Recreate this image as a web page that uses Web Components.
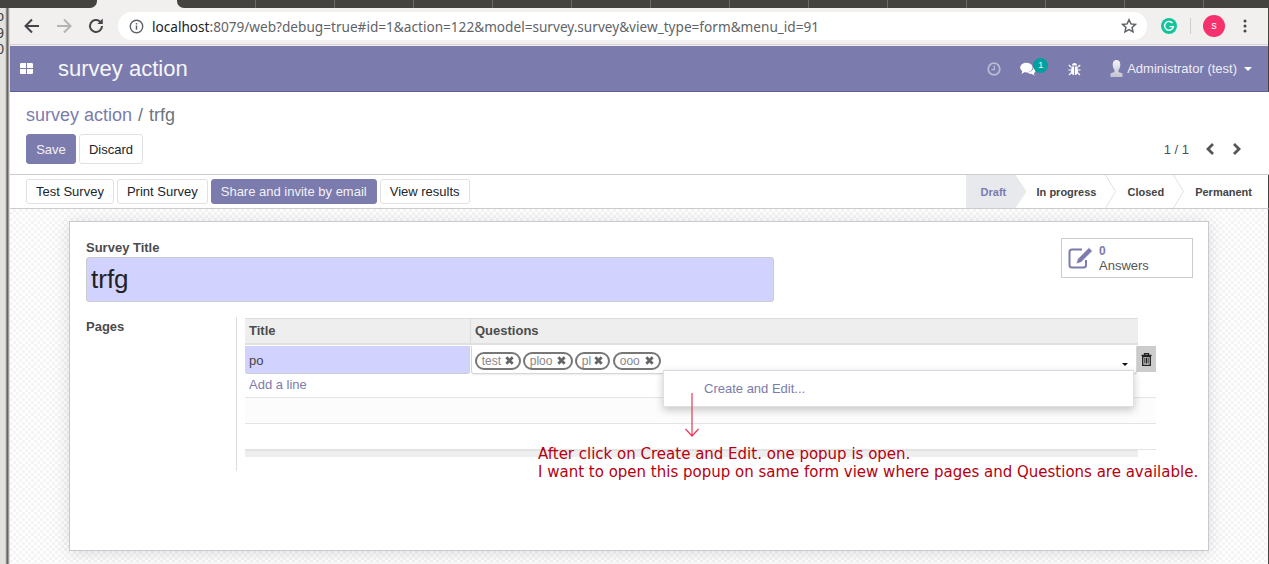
<!DOCTYPE html>
<html>
<head>
<meta charset="utf-8">
<title>survey action</title>
<style>
  html, body { margin: 0; padding: 0; }
  body {
    width: 1269px; height: 564px; overflow: hidden; position: relative;
    display: flex; background: #fff;
    font-family: "Liberation Sans", Arial, sans-serif; font-size: 13px; color: #4c4c4c;
  }
</style>
</head>
<body>
  <window-edge></window-edge>
  <main-column>
    <browser-bar></browser-bar>
    <odoo-navbar></odoo-navbar>
    <control-panel></control-panel>
    <status-bar></status-bar>
    <sheet-area></sheet-area>
  </main-column>
  <anota-cion></anota-cion>

<script>
// Columna principal: apila las barras y la hoja
class MainColumn extends HTMLElement {
  constructor() {
    super();
    this.attachShadow({ mode: 'open' });
    this.shadowRoot.innerHTML = `<style>:host{display:flex;flex-direction:column;flex:1;min-width:0}</style><slot></slot>`;
  }
}

// Trozo de la ventana que asoma por la izquierda
class WindowEdge extends HTMLElement {
  constructor() {
    super();
    this.attachShadow({ mode: 'open' });
    this.shadowRoot.innerHTML = `
      <style>
        :host { display: block; width: 10px; flex: none; height: 564px; overflow: hidden;
          background: linear-gradient(90deg, #e4e2df 0 5px, #bdbbb7 6px, #5f5d59 7px, #6d6b67 8px, #c9c8c5 9px, #ededec 10px); }
        .top { height: 8px; background: #45433f; }
        .txt { width: 4px; overflow: hidden; direction: rtl;
          font: 14px/16.500px "Liberation Sans", sans-serif; color: #444; }
        .txt div { white-space: nowrap; }
      </style>
      <div class="top"></div>
      <div class="txt"><div>o</div><div>9</div><div>0</div></div>`;
  }
}

// Barra del navegador
class BrowserBar extends HTMLElement {
  constructor() {
    super();
    this.attachShadow({ mode: 'open' });
    this.shadowRoot.innerHTML = `
      <style>
        :host { display: block; flex: none; height: 46px; background: #f1f0ee; border-right: 1px solid #45433f; box-sizing: border-box; }
        .tabs { display: flex; height: 8px; background: #f1f0ee; }
        .dark1 { width: 87px; background: #45433f; border-radius: 0 0 7px 0; }
        .tab { width: 80px; }
        .dark2 { flex: 1; border-radius: 0 0 0 7px;
          background: repeating-linear-gradient(90deg, #45433f 0 78px, #6b6965 78px 79px); }
        .tools { display: flex; align-items: center; height: 37px; box-sizing: border-box; border-bottom: 1px solid #d4d3d1; }
        .tools svg { display: block; flex: none; }
        .nav { margin-left: 13px; }
        .omni { display: flex; align-items: center; width: 1029px; height: 28px; margin: 0 0 0 13px; background: #fff;
          border-radius: 14px; box-sizing: border-box; padding-left: 11px; }
        .url { margin-left: 8px; font: 13.620px "Noto Sans", sans-serif; color: #5f6368; white-space: nowrap; flex: 1; }
        .url b { font-weight: 400; color: #202124; }
        .g { width: 16px; height: 16px; border-radius: 50%; background: #15c39a; margin-left: 14px; display: flex; align-items: center; justify-content: center; }
        .sep { width: 1px; height: 16px; background: #d0cfcd; margin: 0 12px 0 13px; }
        .av { width: 22px; height: 22px; border-radius: 50%; background: #f5326e; color: #fff;
          font: 11px/21px "Liberation Sans", sans-serif; text-align: center; }
        .dots { margin-left: 18px; }
      </style>
      <div class="tabs"><div class="dark1"></div><div class="tab"></div><div class="dark2"></div></div>
      <div class="tools">
        <svg class="nav" width="18" height="18" viewBox="0 0 18 18"><path d="M16 9H3M9 2.500 2.500 9 9 15.500" fill="none" stroke="#45464a" stroke-width="2"/></svg>
        <svg style="margin-left:14px" width="18" height="18" viewBox="0 0 18 18"><path d="M2 9h13M9 2.500 15.500 9 9 15.500" fill="none" stroke="#b4b4b4" stroke-width="2"/></svg>
        <svg style="margin-left:14px" width="18" height="18" viewBox="0 0 18 18"><path d="M15 9a6 6 0 1 1-1.800-4.300" fill="none" stroke="#45464a" stroke-width="2"/><path d="M15.800 1.600V7H10.400z" fill="#45464a"/></svg>
        <div class="omni">
          <svg width="15" height="15" viewBox="0 0 15 15"><circle cx="7.500" cy="7.500" r="6.200" fill="none" stroke="#5f6368" stroke-width="1.400"/><path d="M7.500 6.600v4.200M7.500 3.900v1.500" stroke="#5f6368" stroke-width="1.500"/></svg>
          <div class="url"><b>localhost</b>:8079/web?debug=true#id=1&amp;action=122&amp;model=survey.survey&amp;view_type=form&amp;menu_id=91</div>
          <svg style="margin-right:10px" width="16" height="16" viewBox="0 0 16 16"><path d="M8 1.800l1.900 4.100 4.500.5-3.300 3 .9 4.500L8 11.600l-4 2.300.9-4.500-3.300-3 4.500-.5z" fill="none" stroke="#5f6368" stroke-width="1.500"/></svg>
        </div>
        <div class="g"><svg width="12" height="12" viewBox="0 0 12 12"><path d="M9.600 3.200A4.400 4.400 0 1 0 10.400 6.600H6.600" fill="none" stroke="#fff" stroke-width="1.400"/></svg></div>
        <div class="sep"></div>
        <div class="av">s</div>
        <svg class="dots" width="4" height="14" viewBox="0 0 4 14"><circle cx="2" cy="2" r="1.500" fill="#45464a"/><circle cx="2" cy="7" r="1.500" fill="#45464a"/><circle cx="2" cy="12" r="1.500" fill="#45464a"/></svg>
      </div>`;
  }
}

// Barra morada de Odoo
class OdooNavbar extends HTMLElement {
  constructor() {
    super();
    this.attachShadow({ mode: 'open' });
    this.shadowRoot.innerHTML = `
      <style>
        :host { display: flex; align-items: center; flex: none; height: 46px; box-sizing: border-box;
          background: #7c7bad; border-bottom: 1px solid #5f5e97; color: #fff; border-right: 1px solid #45433f; }
        svg { display: block; flex: none; }
        .titulo { font-size: 22px; margin-left: 25px; flex: 1; color: #f6f6fb; }
        .item { position: relative; }
        .badge { position: absolute; left: 13px; top: -4px; width: 15px; height: 15px; border-radius: 50%; background: #00a09d;
          font: 9px/15px "Liberation Sans", sans-serif; text-align: center; color: #fff; }
        .user { font-size: 13px; color: #eeeef6; margin-left: 4px; white-space: nowrap; }
        .caret { width: 0; height: 0; border: 4px solid transparent; border-top-color: #fff; border-bottom: 0; margin: 0 16px 0 7px; }
      </style>
      <svg style="margin-left:10px" width="13" height="11" viewBox="0 0 13 11"><path d="M0 1.200Q0 0 1.200 0H6v5H0zM7 0h4.800Q13 0 13 1.200V5H7zM0 6h6v5H1.200Q0 11 0 9.800zM7 6h6v3.800Q13 11 11.800 11H7z" fill="#fff"/></svg>
      <div class="titulo">survey action</div>
      <svg width="14" height="14" viewBox="0 0 14 14"><circle cx="7" cy="7" r="5.800" fill="none" stroke="#b9b9d5" stroke-width="1.800"/><path d="M7.300 3.500V7.600H4.400" fill="none" stroke="#b9b9d5" stroke-width="1.300"/></svg>
      <div class="item" style="margin-left:19px;width:45px">
        <svg width="16" height="14" viewBox="0 0 16 14"><ellipse cx="6.400" cy="5.600" rx="6.200" ry="4.800" fill="#fff"/><path d="M2.500 8.500 1.500 12l4-2.600z" fill="#fff"/><path d="M13.400 5.600c1.600 1 2.400 2.200 2 3.600-.3 1-1 1.600-1.600 2l.9 2.300-3.600-1.800c-1.500 0-3-.4-4-1.300 3.500 0 6.300-1.900 6.300-4.800z" fill="#fff"/></svg>
        <div class="badge">1</div>
      </div>
      <svg style="margin-left:3px" width="13" height="14" viewBox="0 0 13 14"><path d="M4 3.500Q4 1 6.500 1T9 3.500zM3.500 4.500h2.600V13Q3 12.800 3 9.500zM6.900 4.500h2.600l.5 5q0 3.300-3.100 3.500z" fill="#fff"/><path d="M3 5 .8 3M10 5l2.200-2M3 8H.4M10 8h2.600M3.300 10.800 1 13M9.700 10.800 12 13" stroke="#fff" stroke-width="1.200"/></svg>
      <svg style="margin-left:29px" width="13" height="17" viewBox="0 0 13 17"><defs><linearGradient id="u" x1="0" y1="0" x2="0" y2="1"><stop offset="0" stop-color="#f4f4f6"/><stop offset="1" stop-color="#c4c4d2"/></linearGradient></defs><path d="M6.500 0C9 0 10.300 2 10.300 4.800c0 2.200-.8 4-1.800 5.200v2l4 1.600V17H.5v-3.400l4-1.600v-2C3.500 8.800 2.700 7 2.700 4.800 2.700 2 4 0 6.500 0z" fill="url(#u)"/></svg>
      <div class="user">Administrator (test)</div>
      <div class="caret"></div>`;
  }
}

// Boton de Odoo, con atributo primary
class OBtn extends HTMLElement {
  constructor() {
    super();
    this.attachShadow({ mode: 'open' });
    this.shadowRoot.innerHTML = `
      <style>
        :host { display: inline-flex; align-items: center; justify-content: center; box-sizing: border-box; height: var(--alto, 25px);
          padding: 0 9px; background: #fff; border: 1px solid #dee2e6; border-radius: 3px; color: #212529; white-space: nowrap;
          font: 13px "Liberation Sans", sans-serif; }
        :host([primary]) { background: #7c7bad; border-color: #7c7bad; color: #f1f1f7; }
      </style>
      <slot></slot>`;
  }
}

// Migas, guardar y paginador
class ControlPanel extends HTMLElement {
  constructor() {
    super();
    this.attachShadow({ mode: 'open' });
    this.shadowRoot.innerHTML = `
      <style>
        :host { display: block; flex: none; height: 83px; box-sizing: border-box; padding: 13px 27px 0 16px; border-bottom: 1px solid #ccc; --alto: 30px; }
        .migas { font-size: 18px; line-height: 20px; color: #6c757d; height: 29px; white-space: nowrap; }
        .migas a { color: #7c7bad; }
        .migas span { margin: 0 1px 0 1px; }
        .fila { display: flex; align-items: center; gap: 3px; }
        .pager { margin-left: auto; display: flex; align-items: center; color: #4c4c6c; font-size: 13px; }
        .pager svg { display: block; }
      </style>
      <div class="migas"><a>survey action</a> <span>/</span> trfg</div>
      <div class="fila">
        <o-btn primary style="width:50px">Save</o-btn>
        <o-btn style="width:64px">Discard</o-btn>
        <div class="pager">1 / 1
          <svg style="margin-left:16px" width="10" height="14" viewBox="0 0 10 14"><path d="M8 2 3 7l5 5" fill="none" stroke="#555" stroke-width="2.800"/></svg>
          <svg style="margin-left:17px" width="10" height="14" viewBox="0 0 10 14"><path d="M2 2l5 5-5 5" fill="none" stroke="#555" stroke-width="2.800"/></svg>
        </div>
      </div>`;
  }
}

// Botones de accion y etapas del estado
class StatusBar extends HTMLElement {
  constructor() {
    super();
    this.attachShadow({ mode: 'open' });
    const chevron = `<svg width="11" height="33" viewBox="0 0 11 33"><path d="M.5 0 10.500 16.500.5 33" fill="none" stroke="#dee2e6"/></svg>`;
    this.shadowRoot.innerHTML = `
      <style>
        :host { display: flex; align-items: center; flex: none; height: 34px; box-sizing: border-box; padding-left: 16px; border-bottom: 1px solid #ccc; --alto: 25px; border-right: 1px solid #45433f; }
        .acciones { display: flex; gap: 3px; flex: 1; }
        .etapas { display: flex; align-items: center; height: 33px; font: bold 11px "Liberation Sans", sans-serif; color: #444; }
        .etapas svg { display: block; margin: 0 11px 0 9px; }
        .draft { height: 33px; width: 61px; box-sizing: border-box; padding-left: 15px; margin-right: 10px; display: flex; align-items: center;
          background: #e7e9ed; color: #7c7bad; clip-path: polygon(0 0, 50px 0, 61px 50%, 50px 100%, 0 100%); }
        .ult { margin-right: 16px; }
      </style>
      <div class="acciones">
        <o-btn>Test Survey</o-btn>
        <o-btn>Print Survey</o-btn>
        <o-btn primary>Share and invite by email</o-btn>
        <o-btn>View results</o-btn>
      </div>
      <div class="etapas">
        <div class="draft">Draft</div>
        <div>In progress</div>${chevron}
        <div>Closed</div>${chevron}
        <div class="ult">Permanent</div>
      </div>`;
  }
}

// Pastilla de pregunta con su aspa
class TagPill extends HTMLElement {
  constructor() {
    super();
    this.attachShadow({ mode: 'open' });
    this.shadowRoot.innerHTML = `
      <style>
        :host { display: inline-flex; align-items: center; justify-content: space-between; box-sizing: border-box; height: 18px; padding: 0 5px;
          border: 2px solid #777; border-radius: 9px; color: #888; font: 12px "Liberation Sans", sans-serif; }
        svg { display: block; }
      </style>
      <slot></slot>
      <svg width="9" height="9" viewBox="0 0 9 9"><path d="M1.300 1.300 7.700 7.700M7.700 1.300 1.300 7.700" stroke="#666" stroke-width="2.800"/></svg>`;
  }
}

// Tabla de paginas con el desplegable abierto
class PagesTable extends HTMLElement {
  constructor() {
    super();
    this.attachShadow({ mode: 'open' });
    this.shadowRoot.innerHTML = `
      <style>
        :host { display: block; position: relative; width: 911px; font-size: 13px; }
        .cab { display: flex; width: 893px; height: 27px; box-sizing: border-box; background: #eee; border-top: 1px solid #ddd; border-bottom: 2px solid #dfe0e2;
          font-weight: bold; color: #4c4c4c; line-height: 24px; }
        .cab div { padding-left: 4px; box-sizing: border-box; }
        .cab .t { width: 226px; border-right: 1px solid #ddd; }
        .fila { display: flex; height: 29px; margin-top: 1px; }
        .titulo { width: 225px; height: 28px; box-sizing: border-box; background: #d2d2ff; border-bottom: 1px solid #ccc; border-radius: 0 0 3px 3px;
          line-height: 29px; padding-left: 4px; color: #444; }
        .preg { width: 667px; height: 28px; box-sizing: border-box; margin-left: 1px; background: #fff; border: 1px solid #d5d5da; border-top: 0; border-radius: 0 0 3px 3px;
          display: flex; align-items: center; gap: 2px; padding: 2px 0 0 3px; position: relative; box-shadow: 0 1px 2px rgba(0,0,0,.08); }
        .caret { position: absolute; right: 8px; top: 17px; width: 0; height: 0; border: 3px solid transparent; border-top: 3px solid #111; border-bottom: 0; }
        .papelera { width: 19px; height: 26px; background: #ccc; display: flex; align-items: center; justify-content: center; }
        .add { height: 23px; box-sizing: border-box; border-bottom: 1px solid #e4e4e4; padding: 0 4px; line-height: 20px; color: #7c7bad; }
        .vacia { height: 26px; box-sizing: border-box; border-bottom: 1px solid #e4e4e4; }
        .vacia.par { background: #fcfcfc; }
        .pie { width: 893px; height: 7px; background: #eee; border-top: 1px solid #e2e2e2; box-sizing: border-box; }
        .menu { position: absolute; left: 418px; top: 52px; width: 471px; height: 37px; box-sizing: border-box; background: #fff; border: 1px solid #dee2e6; border-top-color: #d6d8e0;
          box-shadow: 0 3px 8px rgba(0,0,0,.22); padding-left: 40px; line-height: 35px; color: #7c7bad; }
      </style>
      <div class="cab"><div class="t">Title</div><div>Questions</div></div>
      <div class="fila">
        <div class="titulo">po</div>
        <div class="preg">
          <tag-pill style="width:46px">test</tag-pill><tag-pill style="width:50px">ploo</tag-pill><tag-pill style="width:35px">pl</tag-pill><tag-pill style="width:48px;margin-left:1px">ooo</tag-pill>
          <div class="caret"></div>
        </div>
        <div class="papelera">
          <svg width="11" height="13" viewBox="0 0 11 13"><path d="M3.500 2V.7h4V2M.5 2.500h10" fill="none" stroke="#222" stroke-width="1.300"/><path d="M1.700 3.500h7.600V12.300H1.700z" fill="none" stroke="#222" stroke-width="1.300"/><path d="M3.900 5v5.500M5.500 5v5.500M7.100 5v5.500" stroke="#222"/></svg>
        </div>
      </div>
      <div class="add">Add a line</div>
      <div class="vacia par"></div>
      <div class="vacia"></div>
      <div class="pie"></div>
      <div class="menu">Create and Edit...</div>`;
  }
}

// Hoja blanca del formulario sobre el fondo punteado
class SheetArea extends HTMLElement {
  constructor() {
    super();
    this.attachShadow({ mode: 'open' });
    this.shadowRoot.innerHTML = `
      <style>
        :host { display: block; flex: 1; min-height: 0; box-sizing: border-box; padding-top: 12px; border-right: 1px solid #45433f;
          background: repeating-conic-gradient(#f4f4f4 0 25%, #fff 0 50%) 0 0 / 6px 6px; }
        .hoja { width: 1140px; height: 330px; margin-left: 59px; box-sizing: border-box; background: #fff; border: 1px solid #c9c9d2;
          box-shadow: 0 2px 16px rgba(0,0,0,.13); padding: 16px 15px 0 16px; }
        .arriba { display: flex; align-items: flex-start; }
        .titulo { width: 688px; padding-top: 1px; }
        label, .lbl { font-weight: bold; color: #4c4c4c; display: block; }
        label { line-height: 18px; }
        .lbl { line-height: 17px; }
        .input { height: 45px; box-sizing: border-box; background: #d2d2ff; border: 1px solid #ccc; border-radius: 3px; padding-left: 4px;
          font-size: 26px; line-height: 42px; color: #222; }
        .stat { margin-left: auto; width: 132px; height: 40px; box-sizing: border-box; border: 1px solid #ccc; display: flex; align-items: center; padding-left: 6px; color: #555; }
        .stat svg { display: block; margin-right: 6px; }
        .stat div { line-height: 15px; }
        .stat b { display: block; color: #7c7bad; font-size: 12px; line-height: 14px; }
        .grupo { display: flex; margin-top: 15px; }
        .lbl { width: 150px; padding-top: 1px; }
        .lado { height: 154px; box-sizing: border-box; border-left: 1px solid #ddd; padding-left: 8px; padding-top: 1px; }
      </style>
      <div class="hoja">
        <div class="arriba">
          <div class="titulo">
            <label>Survey Title</label>
            <div class="input">trfg</div>
          </div>
          <div class="stat">
            <svg width="25" height="22" viewBox="0 0 25 22"><path d="M14 2.500H4Q1.500 2.500 1.500 5v13Q1.500 20.500 4 20.500h11.500Q18 20.500 18 18v-5" fill="none" stroke="#7c7bad" stroke-width="2"/><path d="M21 .5l3.500 3.500L13 15.500 8 17l1.500-5z" fill="#7c7bad" stroke="#fff" stroke-width=".8"/></svg>
            <div><b>0</b>Answers</div>
          </div>
        </div>
        <div class="grupo">
          <div class="lbl">Pages</div>
          <div class="lado"><pages-table></pages-table></div>
        </div>
      </div>`;
  }
}

// Nota roja y flecha pegadas encima de la captura
class AnotaCion extends HTMLElement {
  constructor() {
    super();
    this.attachShadow({ mode: 'open' });
    this.shadowRoot.innerHTML = `
      <style>
        :host { display: block; position: absolute; left: 0; top: 0; }
        svg { position: absolute; left: 684px; top: 392px; display: block; }
        .nota { position: absolute; left: 538px; top: 445px; white-space: nowrap; font: 15px/18px "DejaVu Sans", sans-serif; color: #b5000f; }
      </style>
      <svg width="16" height="46" viewBox="0 0 16 46"><path d="M8 1V44M1.500 37 8 44l6.500-7" fill="none" stroke="#e8385c" stroke-width="1.200"/></svg>
      <div class="nota">After click on Create and Edit. one popup is open.<br>I want to open this popup on same form view where pages and Questions are available.</div>`;
  }
}

customElements.define('main-column', MainColumn);
customElements.define('window-edge', WindowEdge);
customElements.define('browser-bar', BrowserBar);
customElements.define('odoo-navbar', OdooNavbar);
customElements.define('o-btn', OBtn);
customElements.define('control-panel', ControlPanel);
customElements.define('status-bar', StatusBar);
customElements.define('tag-pill', TagPill);
customElements.define('pages-table', PagesTable);
customElements.define('sheet-area', SheetArea);
customElements.define('anota-cion', AnotaCion);
</script>
</body>
</html>
